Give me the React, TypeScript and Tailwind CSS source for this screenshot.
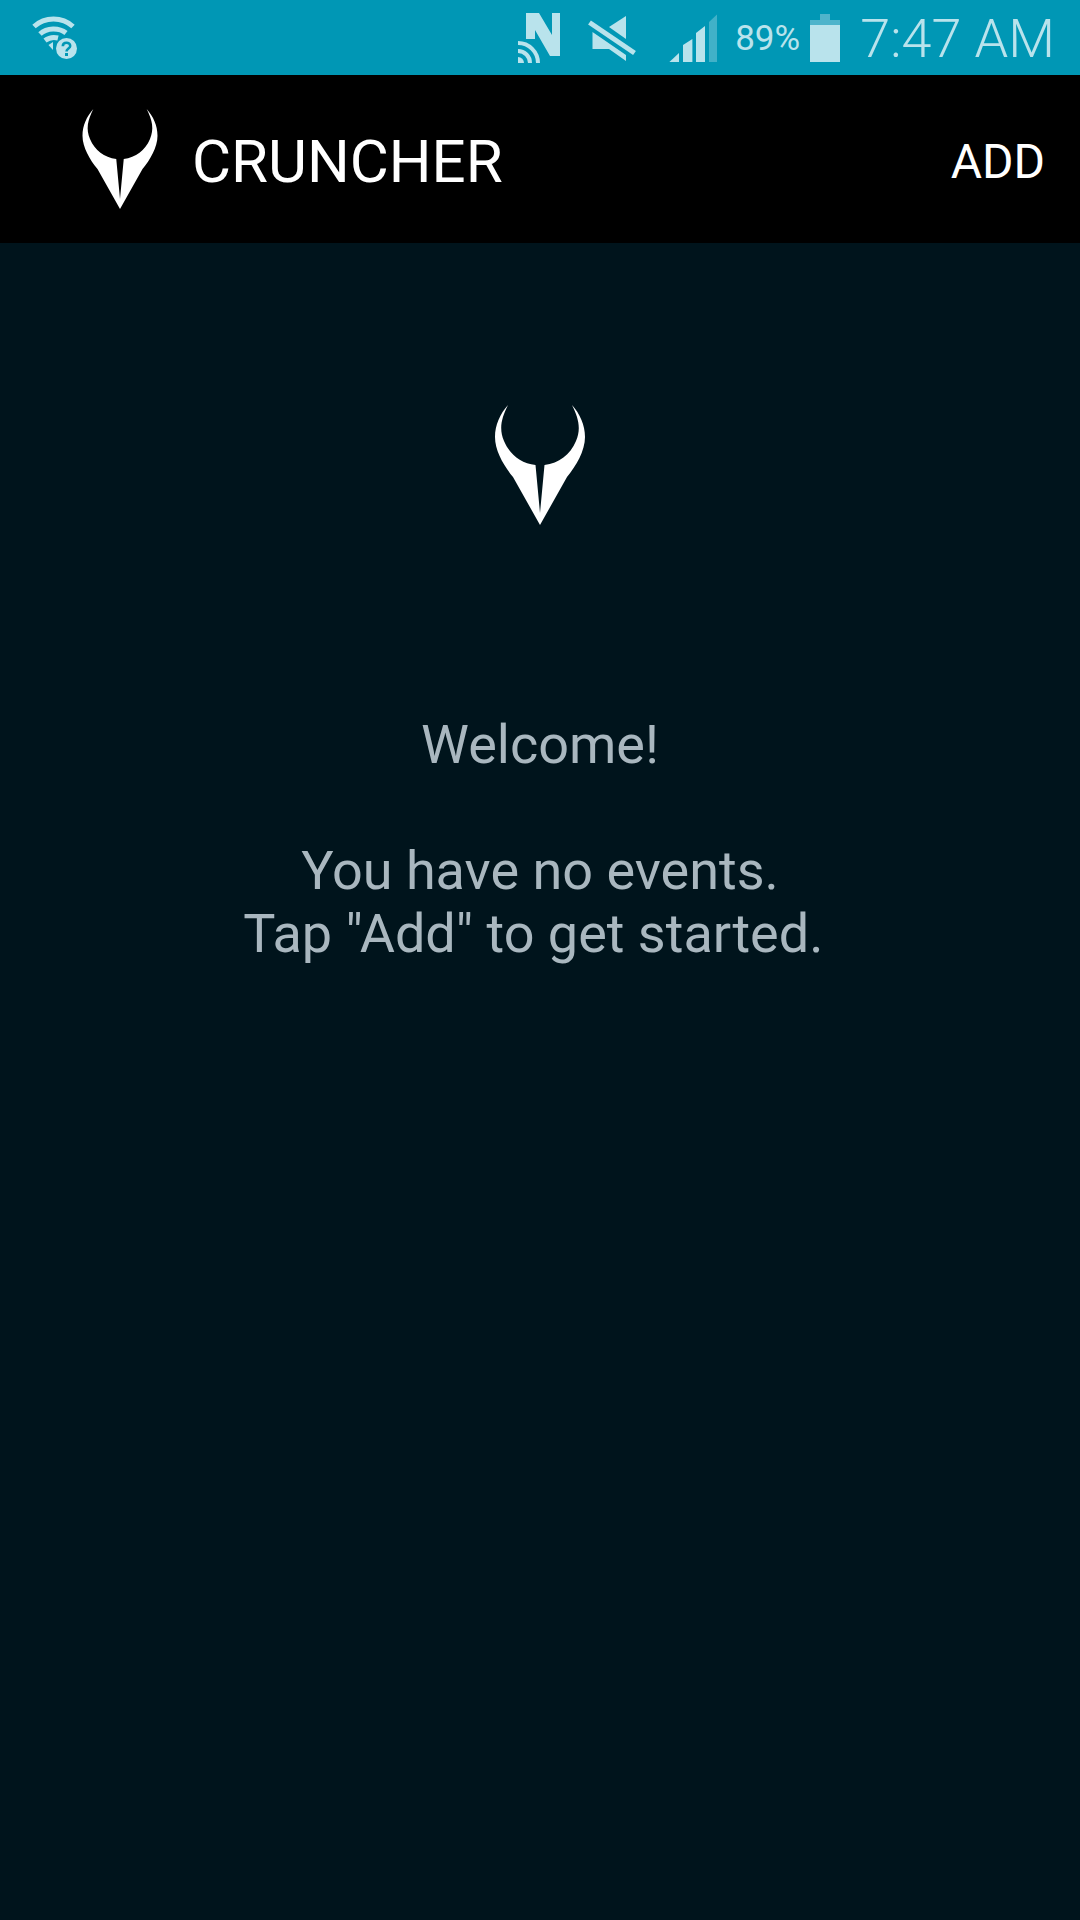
function Logo({ className }: { className: string }) {
  return (
    <svg viewBox="0 0 90 120" className={className} fill="#ffffff">
      <path d="M13 0C5 9 0 20 0 32C0 46 9 61 18 72L45 120L72 72C81 61 90 46 90 32C90 20 85 9 77 0C84 14 86 24 81 36C75 50 64 58 49.5 60L45 108L40.5 60C26 58 15 50 9 36C4 24 6 14 13 0Z" />
    </svg>
  );
}

function WifiIcon() {
  return (
    <svg viewBox="30 14 50 46" className="w-[50px] h-[46px]" fill="none" stroke="#b9e3ec">
      <path d="M34 25.5C45 15.5 62 15.5 73 25.5" strokeWidth="5" />
      <path d="M40 33C47 26.5 59 26.5 66 32" strokeWidth="5" />
      <path d="M45 39.5C49 36.5 54 36 58 37" strokeWidth="5" />
      <path d="M48.5 44L53 41L53 49Z" fill="#b9e3ec" stroke="none" />
      <circle cx="66.5" cy="47.5" r="10.5" fill="#b9e3ec" stroke="none" />
      <path d="M62.8 45.2C62.8 40.6 70.2 40.6 70.2 45C70.2 47.6 66.5 47.6 66.5 50.6" stroke="#0097b5" strokeWidth="2.6" />
      <rect x="65" y="52" width="3" height="3" fill="#0097b5" stroke="none" />
    </svg>
  );
}

function NfcIcon() {
  return (
    <svg viewBox="518 10 42 51" className="w-[42px] h-[51px]" fill="#b9e3ec">
      <polygon points="526,11 539,11 552,33 552,11 560,11 560,54 550,54 535,28 535,37 526,37" />
      <circle cx="518" cy="61" r="6" />
      <path d="M518 49A12 12 0 0 1 530 61" fill="none" stroke="#b9e3ec" strokeWidth="4" />
      <path d="M518 41A20 20 0 0 1 538 61" fill="none" stroke="#b9e3ec" strokeWidth="4" />
    </svg>
  );
}

function MuteIcon() {
  return (
    <svg viewBox="588 12 48 48" className="w-[48px] h-[48px]" fill="#b9e3ec">
      <polygon points="609,25 626,14 626,37" />
      <polygon points="592.5,30 626,53 626,59 609,47 592.5,47" />
      <path d="M589.5 20.5L634.5 51" stroke="#b9e3ec" strokeWidth="5" />
    </svg>
  );
}

function SignalIcon() {
  return (
    <svg viewBox="669 12 48 48" className="w-[48px] h-[48px]" fill="#b9e3ec">
      <polygon points="669.4,60 679,51 679,60" />
      <polygon points="683,60 683,43 692.4,37 692.4,60" />
      <polygon points="696,60 696,31 705,24 705,60" />
      <polygon points="709,60 709,20 717,12.5 717,60" opacity="0.35" />
    </svg>
  );
}

function BatteryIcon() {
  return (
    <svg viewBox="810 11 30 48" className="w-[30px] h-[48px]">
      <path d="M820 11H830V17H840V22H810V17H820Z" fill="#4fb4cb" />
      <rect x="810" y="22" width="30" height="37" fill="#b9e3ec" />
    </svg>
  );
}

export default function App() {
  return (
    <div className="w-[1080px] h-[1920px] flex flex-col bg-[#00141c] font-['Roboto',sans-serif] overflow-hidden">
      <div className="h-[75px] shrink-0 flex items-center bg-[#0097b5] pl-[30px] pr-[25px] text-[#b9e3ec]">
        <WifiIcon />
        <div className="ml-auto flex items-center">
          <NfcIcon />
          <div className="ml-[28px]"><MuteIcon /></div>
          <div className="ml-[33px]"><SignalIcon /></div>
          <span className="ml-[18px] mt-[2px] w-[67px] text-[35px] leading-none">89%</span>
          <div className="ml-[8px]"><BatteryIcon /></div>
          <span className="ml-[20px] mt-[2px] text-[54px] leading-none font-light">7:47 AM</span>
        </div>
      </div>

      <div className="h-[168px] shrink-0 flex items-center bg-black pl-[82px] pr-[35px] text-white">
        <Logo className="w-[76px] h-[100px]" />
        <span className="ml-[34px] mt-[5px] text-[60px] leading-none">CRUNCHER</span>
        <span className="ml-auto mt-[5px] text-[48px] leading-none">ADD</span>
      </div>

      <main className="flex-1 flex flex-col items-center pt-[162px]">
        <Logo className="w-[90px] h-[120px]" />
        <div className="mt-[188px] text-center text-[54px] leading-[63px] text-[#a9b7bf] whitespace-pre">
          <p>Welcome!</p>
          <p className="mt-[63px]">You have no events.</p>
          <p>{'Tap "Add" to get started. '}</p>
        </div>
      </main>
    </div>
  );
}
